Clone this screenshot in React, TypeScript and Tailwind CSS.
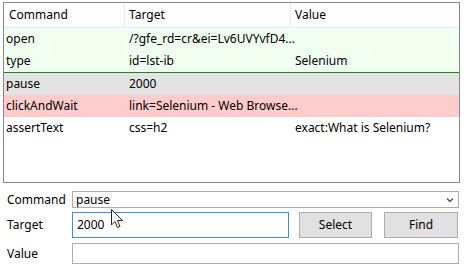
import React from "react";

type Row = {
  command: string;
  target: string;
  value: string;
  bg: string;
  divider?: boolean;
};

const rows: Row[] = [
  { command: "open", target: "/?gfe_rd=cr&ei=Lv6UVYvfD4...", value: "", bg: "bg-[#f0fff0]" },
  { command: "type", target: "id=lst-ib", value: "Selenium", bg: "bg-[#f0fff0]", divider: true },
  { command: "pause", target: "2000", value: "", bg: "bg-[#e3e3e3]" },
  { command: "clickAndWait", target: "link=Selenium - Web Browse...", value: "", bg: "bg-[#ffcccc]" },
  { command: "assertText", target: "css=h2", value: "exact:What is Selenium?", bg: "bg-white" },
];

function Cursor() {
  return (
    <svg
      className="absolute left-[111px] top-[209px]"
      width="13"
      height="20"
      viewBox="0 0 13 20"
    >
      <path
        d="M0.5 0.5 L0.5 16 L4 12.5 L6.5 18.5 L9 17.5 L6.5 11.5 L11.5 11.5 Z"
        fill="white"
        stroke="#222"
        strokeWidth="1"
        strokeLinejoin="miter"
      />
    </svg>
  );
}

export default function App() {
  return (
    <div
      className="relative w-[467px] h-[271px] bg-white text-[12px] text-black overflow-hidden"
      style={{ fontFamily: '"Noto Sans", "Open Sans", sans-serif' }}
    >
      <div className="pt-[2px] pl-[3px]">
        <div className="w-[457px] h-[181px] border border-[#828790] bg-white">
          <div className="flex h-[25px] bg-[#fdfdfd] border-b border-[#e3ecf7]">
            <div className="w-[121px] pl-[5px] flex items-center border-r border-[#e3ecf7]">Command</div>
            <div className="w-[166px] pl-[4px] flex items-center border-r border-[#e3ecf7]">Target</div>
            <div className="flex-1 pl-[4px] flex items-center">Value</div>
          </div>
          {rows.map((r) => (
            <div
              key={r.command}
              className={`flex h-[22px] ${r.bg} ${r.divider ? "border-b border-[#1a8a1a] h-[23px]" : ""}`}
            >
              <div className="w-[121px] pl-[2px] flex items-center">{r.command}</div>
              <div className="w-[166px] pl-[4px] flex items-center whitespace-nowrap">{r.target}</div>
              <div className="flex-1 pl-[4px] flex items-center whitespace-nowrap">{r.value}</div>
            </div>
          ))}
        </div>
      </div>

      <div className="mt-[8px] pl-[7px] flex flex-col">
        <div className="flex items-center h-[17px]">
          <div className="w-[65px]">Command</div>
          <div className="w-[387px] h-[17px] border border-[#acacac] bg-white flex items-center pl-[3px] pr-[4px] justify-between">
            <span>pause</span>
            <svg width="8" height="6" viewBox="0 0 8 6">
              <path d="M1 1.5 L4 4.5 L7 1.5" fill="none" stroke="#555" strokeWidth="1.4" />
            </svg>
          </div>
        </div>
        <div className="flex items-center h-[26px] mt-[4px]">
          <div className="w-[65px]">Target</div>
          <div className="w-[217px] h-[26px] border border-[#3c8ce0] bg-white flex items-center pl-[4px]">
            2000
          </div>
          <button className="ml-[10px] w-[73px] h-[26px] border border-[#adadad] bg-[#e1e1e1] flex items-center justify-center">
            Select
          </button>
          <button className="ml-[12px] w-[74px] h-[26px] border border-[#adadad] bg-[#e1e1e1] flex items-center justify-center">
            Find
          </button>
        </div>
        <div className="flex items-center h-[21px] mt-[5px]">
          <div className="w-[65px]">Value</div>
          <div className="w-[387px] h-[21px] border border-[#acacac] bg-white" />
        </div>
      </div>

      <Cursor />
    </div>
  );
}
